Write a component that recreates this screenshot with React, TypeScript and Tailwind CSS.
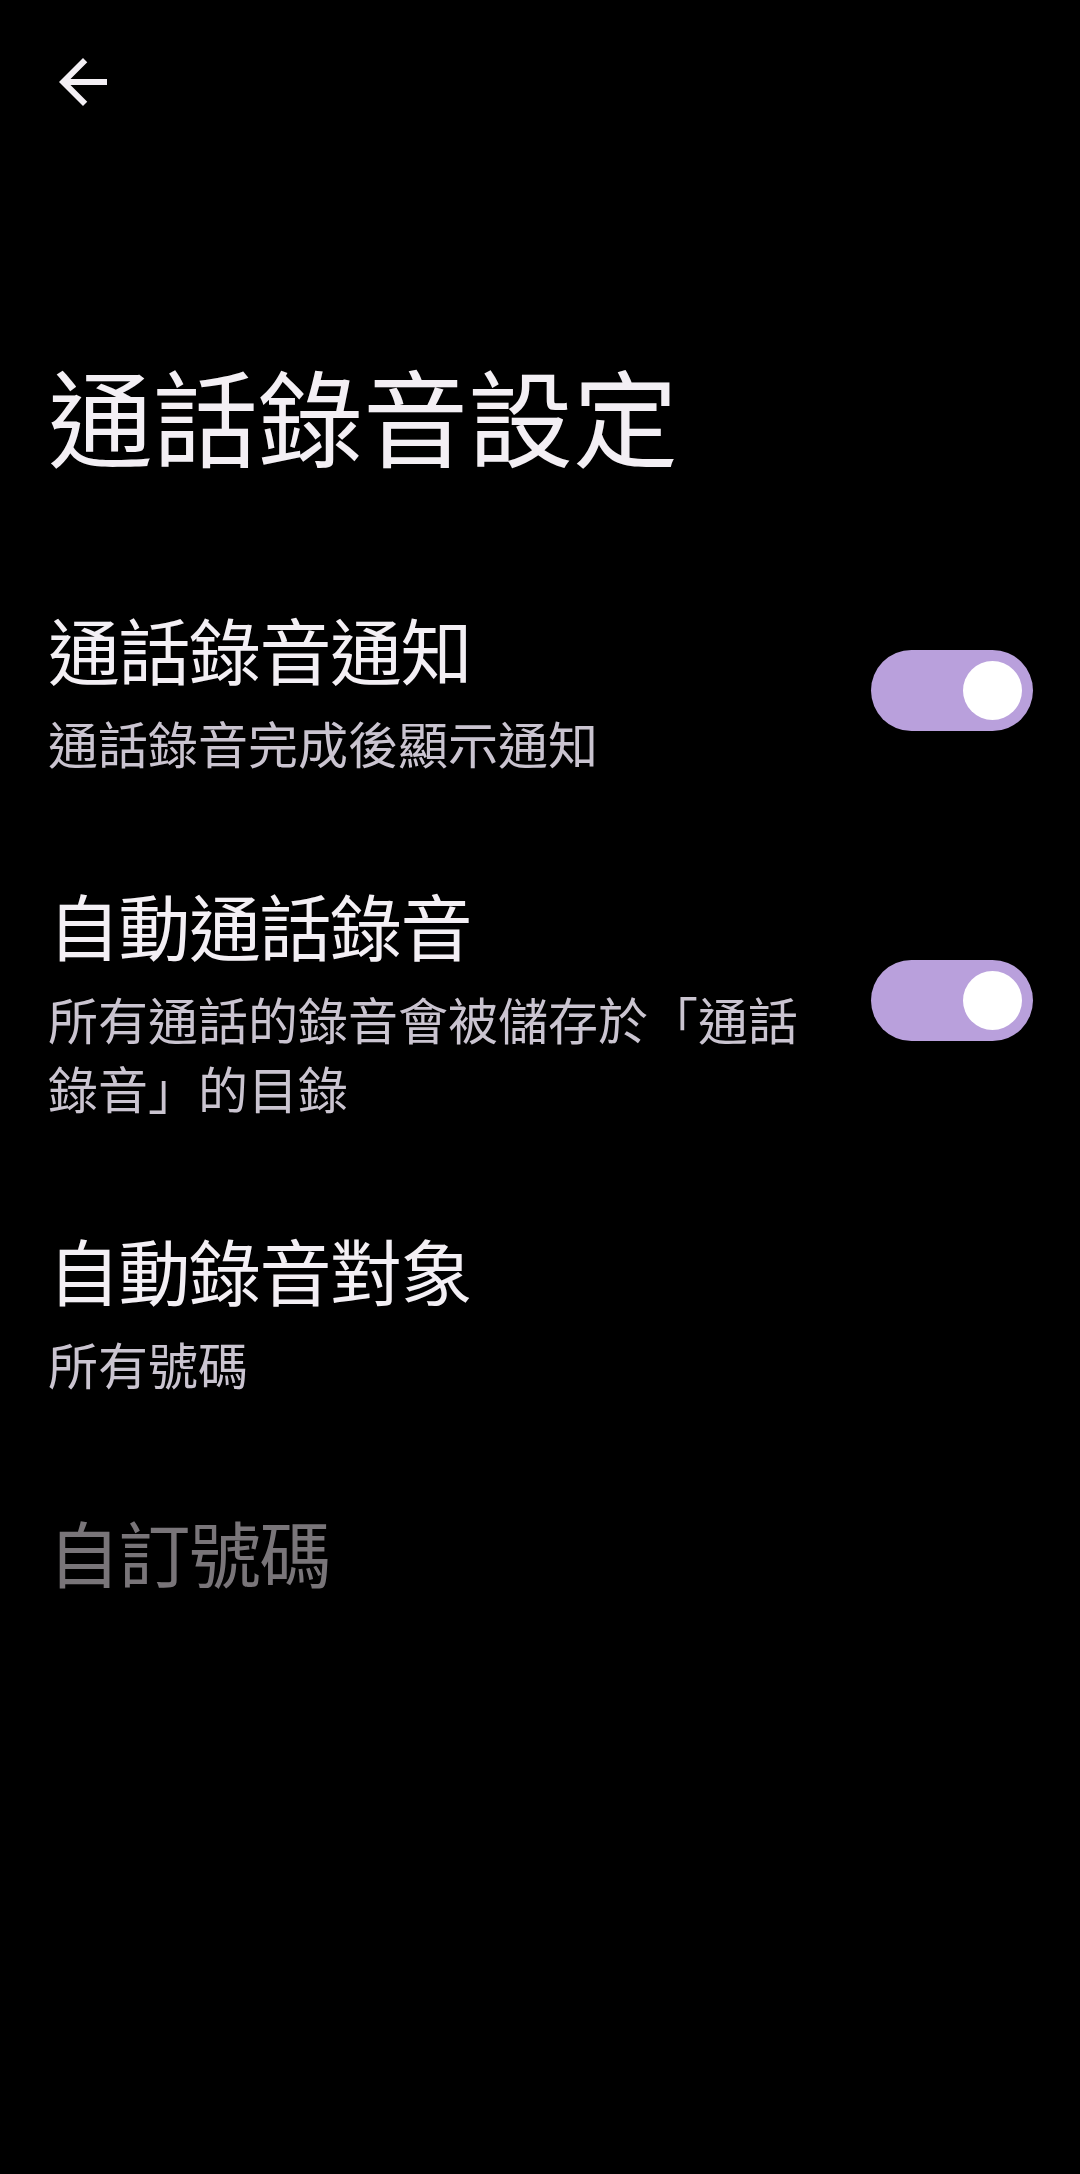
interface RowProps {
  title: string;
  summary?: string;
  toggle?: boolean;
  disabled?: boolean;
}

function Toggle() {
  return (
    <div className="mb-2 ml-12 flex h-[81px] w-[162px] shrink-0 items-center justify-end rounded-full bg-[#b9a0dc] pr-[11px]">
      <div className="h-[59px] w-[59px] rounded-full bg-white" />
    </div>
  );
}

function SettingRow({ title, summary, toggle, disabled }: RowProps) {
  return (
    <div className="flex items-center py-[55px] pr-[47px]">
      <div className="min-w-0 flex-1">
        <div
          className={`text-[72px] leading-[73px] tracking-[-1.5px] ${
            disabled ? "text-[#797579]" : "text-[#f3eff4]"
          }`}
        >
          {title}
        </div>
        {summary && (
          <div className="mt-6 text-[50px] leading-[69px] text-[#cac4d0]">
            {summary}
          </div>
        )}
      </div>
      {toggle && <Toggle />}
    </div>
  );
}

export default function App() {
  return (
    <div
      className="min-h-[2174px] w-[1080px] bg-black pl-[48px]"
      style={{ fontFamily: '"Noto Sans CJK TC", "Noto Sans", sans-serif' }}
    >
      <div className="pt-[46px]">
        <svg
          viewBox="0 0 24 24"
          className="-ml-[1px] h-[72px] w-[72px] fill-[#f3eff4]"
        >
          <path d="M20 11H7.83l5.59-5.59L12 4l-8 8 8 8 1.41-1.41L7.83 13H20v-2z" />
        </svg>
      </div>

      <h1 className="mt-[243px] text-[105px] font-normal leading-[105px] text-[#f3eff4]">
        通話錄音設定
      </h1>

      <div className="mt-[90px]">
        <SettingRow title="通話錄音通知" summary="通話錄音完成後顯示通知" toggle />
        <SettingRow
          title="自動通話錄音"
          summary="所有通話的錄音會被儲存於「通話錄音」的目錄"
          toggle
        />
        <SettingRow title="自動錄音對象" summary="所有號碼" />
        <div className="mt-[6px]">
          <SettingRow title="自訂號碼" disabled />
        </div>
      </div>
    </div>
  );
}
